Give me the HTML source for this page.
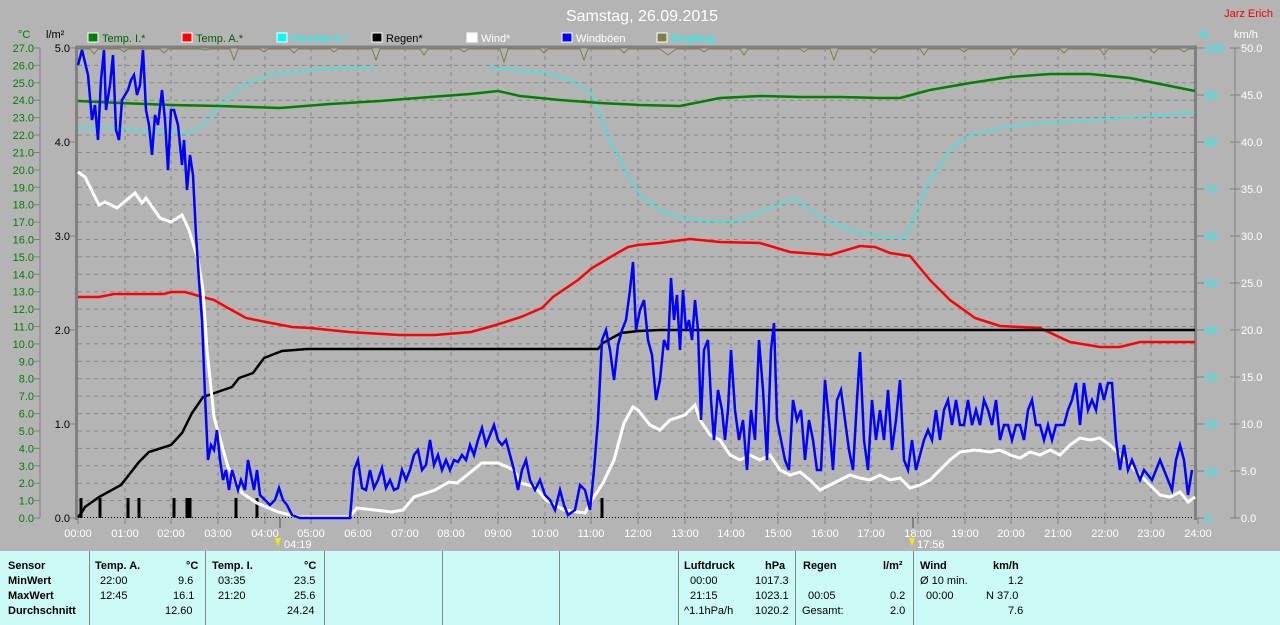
<!DOCTYPE html>
<html><head><meta charset="utf-8"><style>
body{margin:0;width:1280px;height:625px;background:#b4b4b4;overflow:hidden;font-family:"Liberation Sans",sans-serif}
svg{position:absolute;left:0;top:0}
.t{position:absolute;top:551px;left:0;width:1280px;height:74px;background:#ccfaf6;font-size:11px;color:#000}
.c{position:absolute;white-space:nowrap}
.b{font-weight:bold}
.vl{position:absolute;top:0;width:1px;height:74px;background:#888}
</style></head><body>
<svg width="1280" height="551" font-family="Liberation Sans, sans-serif">
<text x="642" y="21" fill="#fff" font-size="16" text-anchor="middle">Samstag, 26.09.2015</text>
<text x="1273" y="17" fill="#e00" font-size="11" text-anchor="end">Jarz Erich</text>
<text x="18" y="38" fill="#008000" font-size="11">°C</text>
<text x="46" y="38" fill="#000" font-size="11">l/m²</text>
<text x="1199" y="38" fill="#0ff" font-size="11">%</text>
<text x="1234" y="38" fill="#fff" font-size="11">km/h</text>
<g font-size="11">
<rect x="88" y="33" width="10" height="9" fill="#008000" stroke="#fff"/><text x="102" y="42" fill="#006000">Temp. I.*</text>
<rect x="182" y="33" width="10" height="9" fill="#f00" stroke="#fff"/><text x="196" y="42" fill="#006000">Temp. A.*</text>
<rect x="277" y="33" width="10" height="9" fill="#0ff" stroke="#fff"/><text x="291" y="42" fill="#0ff">Feuchte A.*</text>
<rect x="372" y="33" width="10" height="9" fill="#000" stroke="#fff"/><text x="386" y="42" fill="#000">Regen*</text>
<rect x="467" y="33" width="10" height="9" fill="#fff" stroke="#fff"/><text x="481" y="42" fill="#fff">Wind*</text>
<rect x="562" y="33" width="10" height="9" fill="#00f" stroke="#fff"/><text x="576" y="42" fill="#fff">Windböen</text>
<rect x="657" y="33" width="10" height="9" fill="#808040" stroke="#fff"/><text x="671" y="42" fill="#0ff">Empfang</text>
</g>
<!-- grid -->
<g stroke="#888" stroke-dasharray="4,4" stroke-width="1">
<path d="M78 65.4H1195M78 82.8H1195M78 100.2H1195M78 117.6H1195M78 135H1195M78 152.5H1195M78 169.9H1195M78 187.3H1195M78 204.7H1195M78 222.1H1195M78 239.5H1195M78 256.9H1195M78 274.3H1195M78 291.7H1195M78 309.1H1195M78 326.5H1195M78 343.9H1195M78 361.3H1195M78 378.7H1195M78 396.1H1195M78 413.6H1195M78 431H1195M78 448.4H1195M78 465.8H1195M78 483.2H1195M78 500.6H1195"/>
<path d="M125 48V518M171 48V518M218 48V518M265 48V518M311 48V518M358 48V518M405 48V518M451 48V518M498 48V518M545 48V518M591 48V518M638 48V518M685 48V518M731 48V518M778 48V518M825 48V518M871 48V518M918 48V518M965 48V518M1011 48V518M1058 48V518M1105 48V518M1151 48V518"/>
</g>
<path d="M78 517.5H1195" stroke="#000" stroke-dasharray="1,2"/>
<!-- axes -->
<g stroke="#808080">
<path d="M40 48V518" stroke-width="1"/>
<path d="M76.5 46V520M1195.5 46V520" stroke-width="3"/>
<path d="M76 47H1197" stroke-width="3"/>
<path d="M1235 48V518"/>
<path d="M34 48H40M34 65.4H40M34 82.8H40M34 100.2H40M34 117.6H40M34 135H40M34 152.5H40M34 169.9H40M34 187.3H40M34 204.7H40M34 222.1H40M34 239.5H40M34 256.9H40M34 274.3H40M34 291.7H40M34 309.1H40M34 326.5H40M34 343.9H40M34 361.3H40M34 378.7H40M34 396.1H40M34 413.6H40M34 431H40M34 448.4H40M34 465.8H40M34 483.2H40M34 500.6H40M34 518H40"/>
<path d="M70 48H76M70 142H76M70 236H76M70 330H76M70 424H76M70 518H76"/>
<path d="M1197 48H1204M1197 95H1204M1197 142H1204M1197 189H1204M1197 236H1204M1197 283H1204M1197 330H1204M1197 377H1204M1197 424H1204M1197 471H1204M1197 518H1204"/>
<path d="M1230 48H1240M1230 95H1240M1230 142H1240M1230 189H1240M1230 236H1240M1230 283H1240M1230 330H1240M1230 377H1240M1230 424H1240M1230 471H1240M1230 518H1240"/>
<path d="M78 518V524M125 518V524M171 518V524M218 518V524M265 518V524M311 518V524M358 518V524M405 518V524M451 518V524M498 518V524M545 518V524M591 518V524M638 518V524M685 518V524M731 518V524M778 518V524M825 518V524M871 518V524M918 518V524M965 518V524M1011 518V524M1058 518V524M1105 518V524M1151 518V524M1198 518V524"/>
<path d="M280 518V528M913 518V528" stroke-width="2"/>
</g>
<g font-size="11" fill="#008000" text-anchor="end">
<text x="34" y="52">27.0</text><text x="34" y="69.4">26.0</text><text x="34" y="86.8">25.0</text><text x="34" y="104.2">24.0</text><text x="34" y="121.6">23.0</text><text x="34" y="139">22.0</text><text x="34" y="156.5">21.0</text><text x="34" y="173.9">20.0</text><text x="34" y="191.3">19.0</text><text x="34" y="208.7">18.0</text><text x="34" y="226.1">17.0</text><text x="34" y="243.5">16.0</text><text x="34" y="260.9">15.0</text><text x="34" y="278.3">14.0</text><text x="34" y="295.7">13.0</text><text x="34" y="313.1">12.0</text><text x="34" y="330.5">11.0</text><text x="34" y="347.9">10.0</text><text x="34" y="365.3">9.0</text><text x="34" y="382.7">8.0</text><text x="34" y="400.1">7.0</text><text x="34" y="417.6">6.0</text><text x="34" y="435">5.0</text><text x="34" y="452.4">4.0</text><text x="34" y="469.8">3.0</text><text x="34" y="487.2">2.0</text><text x="34" y="504.6">1.0</text><text x="34" y="522">0.0</text>
</g>
<g font-size="11" fill="#000" text-anchor="end">
<text x="70" y="52">5.0</text><text x="70" y="146">4.0</text><text x="70" y="240">3.0</text><text x="70" y="334">2.0</text><text x="70" y="428">1.0</text><text x="70" y="522">0.0</text>
</g>
<g font-size="11" fill="#0ff">
<text x="1205" y="52">100</text><text x="1205" y="99">90</text><text x="1205" y="146">80</text><text x="1205" y="193">70</text><text x="1205" y="240">60</text><text x="1205" y="287">50</text><text x="1205" y="334">40</text><text x="1205" y="381">30</text><text x="1205" y="428">20</text><text x="1205" y="475">10</text><text x="1205" y="522">0</text>
</g>
<g font-size="11" fill="#fff">
<text x="1241" y="52">50.0</text><text x="1241" y="99">45.0</text><text x="1241" y="146">40.0</text><text x="1241" y="193">35.0</text><text x="1241" y="240">30.0</text><text x="1241" y="287">25.0</text><text x="1241" y="334">20.0</text><text x="1241" y="381">15.0</text><text x="1241" y="428">10.0</text><text x="1241" y="475">5.0</text><text x="1241" y="522">0.0</text>
</g>
<g font-size="11" fill="#fff" text-anchor="middle">
<text x="78" y="537">00:00</text><text x="125" y="537">01:00</text><text x="171" y="537">02:00</text><text x="218" y="537">03:00</text><text x="265" y="537">04:00</text><text x="311" y="537">05:00</text><text x="358" y="537">06:00</text><text x="405" y="537">07:00</text><text x="451" y="537">08:00</text><text x="498" y="537">09:00</text><text x="545" y="537">10:00</text><text x="591" y="537">11:00</text><text x="638" y="537">12:00</text><text x="685" y="537">13:00</text><text x="731" y="537">14:00</text><text x="778" y="537">15:00</text><text x="825" y="537">16:00</text><text x="871" y="537">17:00</text><text x="918" y="537">18:00</text><text x="965" y="537">19:00</text><text x="1011" y="537">20:00</text><text x="1058" y="537">21:00</text><text x="1105" y="537">22:00</text><text x="1151" y="537">23:00</text><text x="1198" y="537">24:00</text>
</g>
<g font-size="11" fill="#fff">
<path d="M275 538l3 8l3-8z" fill="#ee0"/><text x="284" y="548">04:19</text>
<path d="M909 538l3 8l3-8z" fill="#ee0"/><text x="917" y="548">17:56</text>
</g>
<!-- olive reception -->
<polyline fill="none" stroke="#808040" stroke-width="1" points="78,49 90,49 94,54 98,49 120,49 124,52 128,49 160,49 164,53 168,49 200,49 205,50 210,49 230,49 234,60 238,49 260,49 264,52 268,49 290,49 294,53 298,49 330,49 334,52 338,49 372,49 376,60 380,49 420,49 424,55 428,49 460,49 464,52 468,49 500,49 504,62 508,49 540,49 544,53 548,49 580,49 584,60 588,49 620,49 624,53 628,49 660,49 668,55 676,49 700,49 704,52 708,49 740,49 744,55 748,49 800,49 804,52 808,49 830,49 834,60 838,49 870,49 874,53 878,49 920,49 924,55 928,49 960,49 964,52 968,49 1010,49 1014,55 1018,49 1060,49 1064,53 1068,49 1100,49 1104,55 1108,49 1150,49 1154,53 1158,49 1180,49 1184,52 1188,49 1195,49"/>
<!-- humidity -->
<polyline fill="none" stroke="#0ff" stroke-width="1" points="78,128 120,128 140,131 170,131 190,133 205,124 220,105 235,92 250,82 270,75 300,71 340,68 375,68"/>
<polyline fill="none" stroke="#0ff" stroke-width="1" points="490,68 520,70 545,73 570,80 590,92 600,115 610,140 625,170 640,195 660,210 680,218 700,220 720,222 740,220 760,212 780,204 795,198 810,210 830,222 850,230 870,235 890,237 905,238 915,215 930,180 950,150 970,135 1000,128 1030,124 1060,122 1090,121 1120,118 1150,116 1195,112"/>
<!-- temp I -->
<polyline fill="none" stroke="#008000" stroke-width="2.5" points="78,101 120,103 171,105 220,106 280,108 330,104 380,101 430,97 470,94 498,91 520,96 560,100 600,103 640,105 680,106 720,98 760,96 800,97 840,97 880,98 900,98 930,90 970,83 1010,77 1050,74 1090,74 1130,78 1160,84 1195,91"/>
<!-- temp A -->
<polyline fill="none" stroke="#f00" stroke-width="2.5" points="78,297 99,297 114,294 164,294 171,292 185,292 199,296 214,300 228,308 246,318 271,323 292,327 310,328 349,332 399,335 435,335 471,332 496,325 521,317 542,308 553,297 578,280 592,268 614,255 628,247 638,245 660,243 690,239 720,242 760,243 790,252 830,255 860,246 875,247 890,253 910,256 930,280 950,300 975,318 1000,326 1040,328 1070,342 1100,347 1120,347 1140,342 1195,342"/>
<!-- rain -->
<g stroke="#000" stroke-width="3"><path d="M81 498V518M100 498V518M128 498V518M139 498V518M174 498V518M187 498V518M190 498V518M236 498V518M257 498V518M602 498V518"/></g>
<polyline fill="none" stroke="#000" stroke-width="2.5" points="78,517 82,512 85,507 99,497 121,485 139,462 149,452 171,445 182,433 192,413 203,397 232,387 239,378 253,373 264,358 282,351 307,349 598,349 603,343 621,333 638,331 660,330 1195,330"/>
<!-- wind -->
<polyline fill="none" stroke="#fff" stroke-width="3" points="78,172 85,177 99,205 105,202 117,208 135,193 142,203 146,198 160,218 171,222 182,215 189,230 198,260 203,290 207,350 214,417 228,467 242,493 257,503 278,512 299,517 349,517 357,508 374,510 392,512 403,510 414,497 435,490 449,482 457,483 482,463 498,463 514,470 521,483 535,487 546,500 564,510 585,513 592,500 603,483 614,460 624,423 633,407 638,410 650,425 660,430 670,420 685,415 695,405 700,420 710,435 720,440 730,455 740,460 750,455 760,460 770,455 780,470 790,475 800,472 810,480 820,490 830,485 840,480 850,475 860,478 870,480 880,475 890,480 900,478 910,488 920,485 930,480 940,470 950,460 960,452 975,450 990,452 1000,450 1010,455 1020,458 1030,452 1040,455 1050,450 1060,455 1070,445 1080,438 1090,440 1100,438 1110,445 1120,455 1130,465 1140,475 1150,485 1160,495 1170,497 1180,492 1188,502 1195,497"/>
<!-- gusts -->
<polyline fill="none" stroke="#00f" stroke-width="2.5" points="78,65 82,50 88,75 92,120 95,105 98,140 101,80 104,50 106,110 110,85 113,55 116,130 119,140 122,100 125,95 128,90 131,80 134,75 137,95 140,85 143,50 146,110 149,125 152,155 155,115 158,125 162,90 165,120 168,170 171,110 174,110 178,125 182,165 184,140 187,190 190,155 193,175 196,235 199,280 202,320 205,395 208,460 211,445 214,450 217,430 220,460 223,480 226,470 229,490 232,470 235,480 238,490 241,480 245,490 248,460 251,475 254,490 257,470 260,495 265,500 270,505 275,500 279,488 283,500 287,505 292,515 300,518 350,518 354,470 358,460 362,488 366,490 370,470 374,488 378,480 382,468 386,488 390,480 394,490 398,488 402,470 406,480 410,470 414,455 418,450 422,470 426,465 430,440 434,465 438,455 442,470 446,460 450,470 454,460 458,462 462,455 466,460 470,445 474,455 478,440 482,428 486,445 490,435 494,425 498,440 502,445 506,440 510,455 514,470 518,490 522,470 526,460 530,480 535,490 540,480 545,495 550,500 555,510 560,490 564,505 568,515 575,510 580,485 585,490 590,510 594,470 598,420 602,340 606,330 610,350 614,380 618,345 622,330 626,320 630,290 633,262 636,330 640,310 644,300 648,340 652,355 656,400 660,380 664,340 668,350 671,278 674,320 677,295 680,350 683,290 686,330 689,320 692,340 695,300 698,330 701,420 704,350 708,340 711,400 714,440 718,390 722,410 725,440 728,410 731,350 735,410 739,440 743,420 747,470 751,410 755,440 759,340 763,390 767,460 771,350 774,323 777,420 781,440 785,460 789,470 793,400 797,420 801,410 805,460 809,420 813,440 817,470 821,470 825,380 829,420 833,470 837,400 841,390 845,420 849,450 853,470 857,400 860,352 864,440 868,470 872,400 876,440 880,410 884,440 888,390 892,450 896,420 900,380 904,460 908,470 912,440 916,470 920,455 924,440 928,430 932,440 936,410 940,440 944,410 948,400 952,425 956,400 960,425 964,425 968,400 972,425 976,410 980,425 984,400 988,410 992,425 996,400 1000,440 1004,425 1008,425 1012,440 1016,425 1020,425 1024,440 1028,410 1032,400 1036,425 1040,425 1044,440 1048,425 1052,440 1056,425 1060,425 1064,425 1068,410 1072,400 1076,383 1080,425 1084,383 1088,410 1092,400 1096,410 1100,383 1104,400 1108,383 1112,383 1116,440 1120,470 1124,445 1128,470 1132,460 1136,470 1140,480 1144,470 1148,475 1152,480 1156,470 1160,460 1164,470 1168,480 1172,490 1176,460 1180,445 1184,460 1188,495 1192,470"/>
</svg>
<div class="t">
<div class="vl" style="left:89px"></div><div class="vl" style="left:205px"></div><div class="vl" style="left:324px"></div><div class="vl" style="left:442px"></div><div class="vl" style="left:559px"></div><div class="vl" style="left:678px"></div><div class="vl" style="left:795px"></div><div class="vl" style="left:913px"></div>
<div class="c b" style="left:8px;top:9px">Sensor</div>
<div class="c b" style="left:8px;top:24px">MinWert</div>
<div class="c b" style="left:8px;top:39px">MaxWert</div>
<div class="c b" style="left:8px;top:54px">Durchschnitt</div>
<div class="c b" style="left:95px;top:9px">Temp. A.</div><div class="c b" style="left:186px;top:9px">°C</div>
<div class="c" style="left:100px;top:24px">22:00</div><div class="c" style="left:178px;top:24px">9.6</div>
<div class="c" style="left:100px;top:39px">12:45</div><div class="c" style="left:173px;top:39px">16.1</div>
<div class="c" style="left:165px;top:54px">12.60</div>
<div class="c b" style="left:212px;top:9px">Temp. I.</div><div class="c b" style="left:304px;top:9px">°C</div>
<div class="c" style="left:218px;top:24px">03:35</div><div class="c" style="left:294px;top:24px">23.5</div>
<div class="c" style="left:218px;top:39px">21:20</div><div class="c" style="left:294px;top:39px">25.6</div>
<div class="c" style="left:287px;top:54px">24.24</div>
<div class="c b" style="left:684px;top:9px">Luftdruck</div><div class="c b" style="left:765px;top:9px">hPa</div>
<div class="c" style="left:690px;top:24px">00:00</div><div class="c" style="left:755px;top:24px">1017.3</div>
<div class="c" style="left:690px;top:39px">21:15</div><div class="c" style="left:755px;top:39px">1023.1</div>
<div class="c" style="left:684px;top:54px">^1.1hPa/h</div><div class="c" style="left:755px;top:54px">1020.2</div>
<div class="c b" style="left:803px;top:9px">Regen</div><div class="c b" style="left:883px;top:9px">l/m²</div>
<div class="c" style="left:808px;top:39px">00:05</div><div class="c" style="left:890px;top:39px">0.2</div>
<div class="c" style="left:802px;top:54px">Gesamt:</div><div class="c" style="left:890px;top:54px">2.0</div>
<div class="c b" style="left:920px;top:9px">Wind</div><div class="c b" style="left:993px;top:9px">km/h</div>
<div class="c" style="left:920px;top:24px">Ø 10 min.</div><div class="c" style="left:1008px;top:24px">1.2</div>
<div class="c" style="left:926px;top:39px">00:00</div><div class="c" style="left:986px;top:39px">N 37.0</div>
<div class="c" style="left:1008px;top:54px">7.6</div>
</div>
</body></html>
